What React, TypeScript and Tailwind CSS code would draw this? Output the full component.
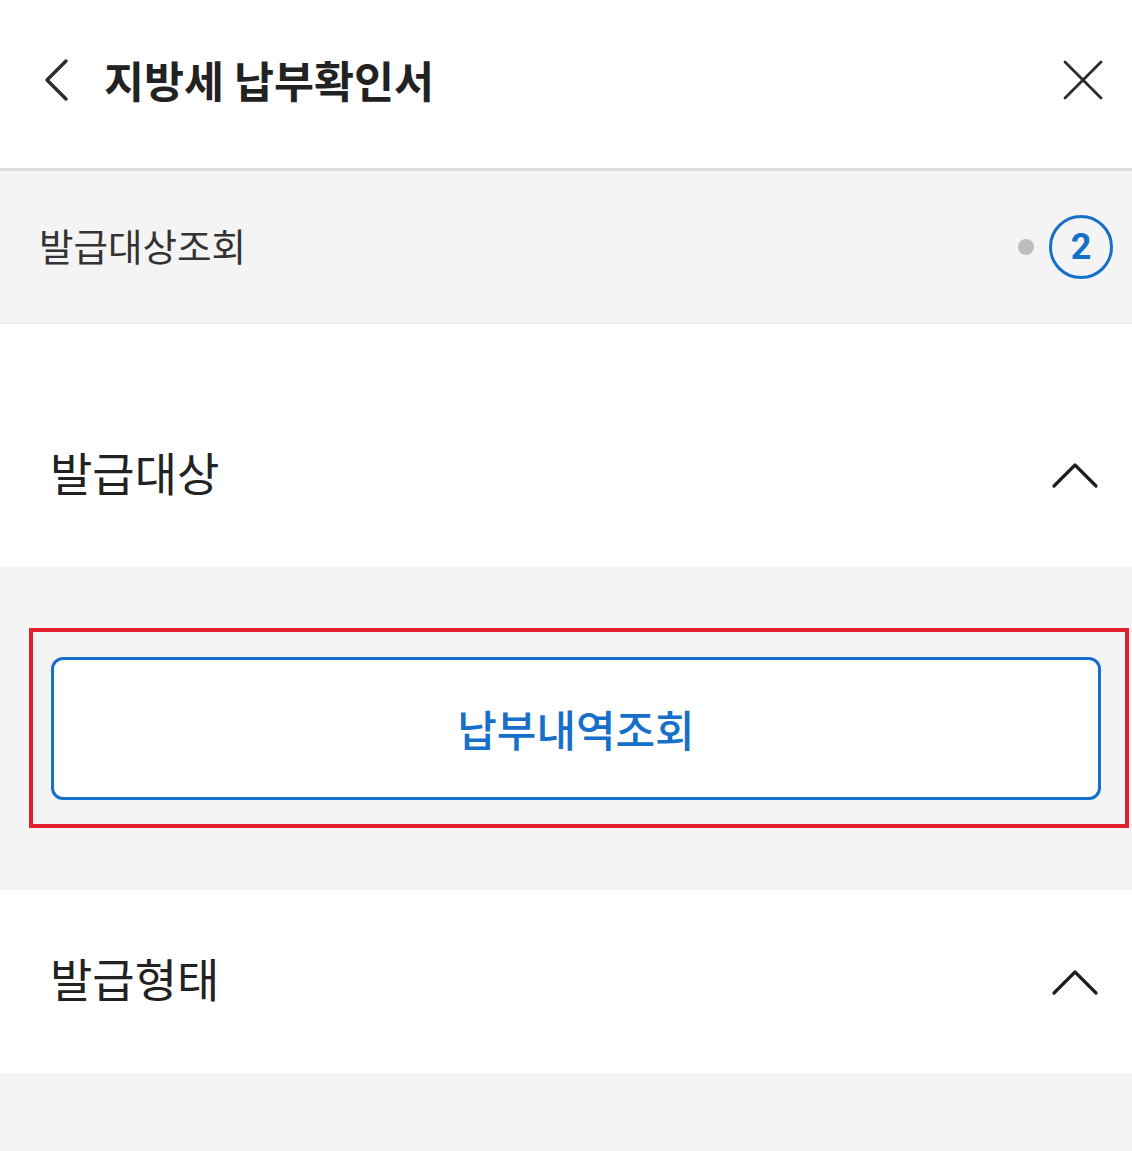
import { ReactNode } from 'react';

const kr = "font-['Noto_Sans_CJK_KR','Noto_Sans',sans-serif]";

function BackIcon() {
  return (
    <svg width="26" height="44" viewBox="0 0 26 44" fill="none" stroke="#2b2b2b" strokeWidth="3.4" strokeLinecap="round" strokeLinejoin="round">
      <polyline points="23,3 4,22 23,41" />
    </svg>
  );
}

function CloseIcon() {
  return (
    <svg width="40" height="40" viewBox="0 0 40 40" fill="none" stroke="#2b2b2b" strokeWidth="2.8" strokeLinecap="round">
      <line x1="2" y1="2" x2="38" y2="38" />
      <line x1="38" y1="2" x2="2" y2="38" />
    </svg>
  );
}

function ChevronUp() {
  return (
    <svg width="48" height="28" viewBox="0 0 48 28" fill="none" stroke="#1f1f1f" strokeWidth="3.2" strokeLinecap="round" strokeLinejoin="round">
      <polyline points="3,25 24,4 45,25" />
    </svg>
  );
}

function SectionHeader({ title, className }: { title: string; className: string }) {
  return (
    <div className={`flex items-center justify-between bg-white pl-[50px] pr-[33px] ${className}`}>
      <span className={`${kr} mb-[9px] text-[46px] leading-none text-[#222]`}>{title}</span>
      <ChevronUp />
    </div>
  );
}

function Panel({ children }: { children: ReactNode }) {
  return <div className="bg-[#f4f4f4] pb-[62px] pl-[29px] pr-[3px] pt-[61px]">{children}</div>;
}

export default function App() {
  return (
    <div className="flex min-h-screen w-full flex-col bg-[#f4f4f4]">
      {/* top bar */}
      <header className="flex h-[171px] items-center justify-between border-b-[3px] border-[#dcdcdc] bg-white pb-[8px] pl-[43px] pr-[29px]">
        <div className="flex items-center">
          <BackIcon />
          <h1 className={`${kr} ml-[35px] text-[43.5px] font-bold leading-none text-[#222]`}>지방세 납부확인서</h1>
        </div>
        <CloseIcon />
      </header>

      {/* step indicator */}
      <div className="flex h-[153px] items-center justify-between border-b border-[#ececec] bg-[#f4f4f4] pl-[39px] pr-[19px]">
        <span className={`${kr} mb-[4px] text-[37.5px] leading-none text-[#333]`}>발급대상조회</span>
        <div className="flex items-center gap-[15px]">
          <span className="h-[16px] w-[16px] rounded-full bg-[#bdbdbd]" />
          <span className="flex h-[64px] w-[64px] items-center justify-center rounded-full border-[3px] border-[#1670c9] font-['Roboto',sans-serif] text-[36px] font-bold leading-none text-[#1670c9]">
            2
          </span>
        </div>
      </div>

      <div className="bg-white pt-[59px]">
        <SectionHeader title="발급대상" className="h-[184px]" />
      </div>

      <Panel>
        <div className="border-[4px] border-[#e3202b] pb-[24px] pl-[18px] pr-[24px] pt-[25px]">
          <button className="flex h-[143px] w-full items-center justify-center rounded-[12px] border-[3px] border-[#1670c9] bg-white">
            <span className={`${kr} text-[43px] font-medium leading-none text-[#1670c9]`}>납부내역조회</span>
          </button>
        </div>
      </Panel>

      <SectionHeader title="발급형태" className="h-[183px]" />
    </div>
  );
}
